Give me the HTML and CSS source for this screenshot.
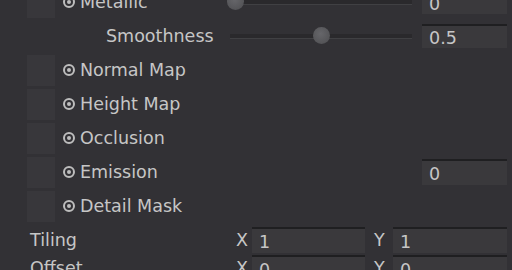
FILE: index.html
```html
<!DOCTYPE html>
<html lang="en">
<head>
  <meta charset="UTF-8" />
  <title>Material Inspector</title>
  <link rel="stylesheet" href="styles.css">
</head>
<body>
  <div class="inspector">

    <div class="row">
      <div class="label-col">
        <div class="slot"></div>
        <span class="pick"></span>
        <span class="name">Metallic</span>
      </div>
      <div class="slider"><div class="knob" style="left: 3%;"></div></div>
      <div class="field">0</div>
    </div>

    <div class="row">
      <div class="label-col">
        <span class="name indent">Smoothness</span>
      </div>
      <div class="slider"><div class="knob" style="left: 50%;"></div></div>
      <div class="field">0.5</div>
    </div>

    <div class="row">
      <div class="label-col">
        <div class="slot"></div>
        <span class="pick"></span>
        <span class="name">Normal Map</span>
      </div>
    </div>

    <div class="row">
      <div class="label-col">
        <div class="slot"></div>
        <span class="pick"></span>
        <span class="name">Height Map</span>
      </div>
    </div>

    <div class="row">
      <div class="label-col">
        <div class="slot"></div>
        <span class="pick"></span>
        <span class="name">Occlusion</span>
      </div>
    </div>

    <div class="row">
      <div class="label-col">
        <div class="slot"></div>
        <span class="pick"></span>
        <span class="name">Emission</span>
      </div>
      <div class="spacer"></div>
      <div class="field tall">0</div>
    </div>

    <div class="row">
      <div class="label-col">
        <div class="slot"></div>
        <span class="pick"></span>
        <span class="name">Detail Mask</span>
      </div>
    </div>

    <div class="vectors">
      <div class="vrow">
        <span class="vlabel">Tiling</span>
        <span class="axis">X</span>
        <div class="field wide">1</div>
        <span class="axis y">Y</span>
        <div class="field wide">1</div>
      </div>
      <div class="vrow">
        <span class="vlabel">Offset</span>
        <span class="axis">X</span>
        <div class="field wide">0</div>
        <span class="axis y">Y</span>
        <div class="field wide">0</div>
      </div>
    </div>

  </div>
</body>
</html>
```

FILE: styles.css
```css
body {
  margin: 0;
  background: #323135;
  color: #c6c6c6;
  font-family: 'DejaVu Sans', sans-serif;
  font-size: 17.5px;
  overflow: hidden;
}

.inspector {
  margin-top: -15px;
  padding-left: 27px;
  padding-right: 5px;
}

.row {
  display: flex;
  align-items: center;
  height: 34px;
}

.label-col {
  display: flex;
  align-items: center;
  width: 203px;
  flex-shrink: 0;
}

.slot {
  width: 28px;
  height: 31px;
  background: #38373b;
  margin-right: 8px;
}

.pick {
  width: 8px;
  height: 8px;
  border: 2px solid #bdbdbd;
  border-radius: 50%;
  margin-right: 5px;
  position: relative;
}

.pick::after {
  content: "";
  position: absolute;
  left: 2px;
  top: 2px;
  width: 4px;
  height: 4px;
  border-radius: 50%;
  background: #bdbdbd;
}

.indent {
  margin-left: 79px;
}

.slider {
  position: relative;
  flex-shrink: 0;
  width: 182px;
  height: 4px;
  background: #2a292c;
  border-bottom: 1px solid #404043;
  margin-right: 10px;
}

.knob {
  position: absolute;
  top: -7px;
  width: 17px;
  height: 17px;
  margin-left: -8px;
  border-radius: 50%;
  background: radial-gradient(circle at 45% 40%, #66666a, #4d4d50);
}

.spacer {
  width: 192px;
  flex-shrink: 0;
}

.field {
  box-sizing: border-box;
  flex-shrink: 0;
  width: 85px;
  height: 24px;
  padding: 2px 7px 0;
  background: #3a393c;
  border-top: 2px solid #1f1f21;
  line-height: 20px;
}

.field.tall {
  height: 26px;
  line-height: 22px;
}

.vectors {
  margin-top: 4px;
  display: flex;
  flex-direction: column;
  gap: 2px;
}

.vrow {
  display: flex;
  align-items: center;
  height: 26px;
}

.vlabel {
  width: 209px;
  padding-left: 3px;
  box-sizing: border-box;
  flex-shrink: 0;
}

.axis {
  width: 16px;
  flex-shrink: 0;
}

.axis.y {
  width: 19px;
  margin-left: 9px;
}

.field.wide {
  width: 113px;
  height: 26px;
  line-height: 22px;
}

.field.wide:last-child {
  width: 114px;
}
```
